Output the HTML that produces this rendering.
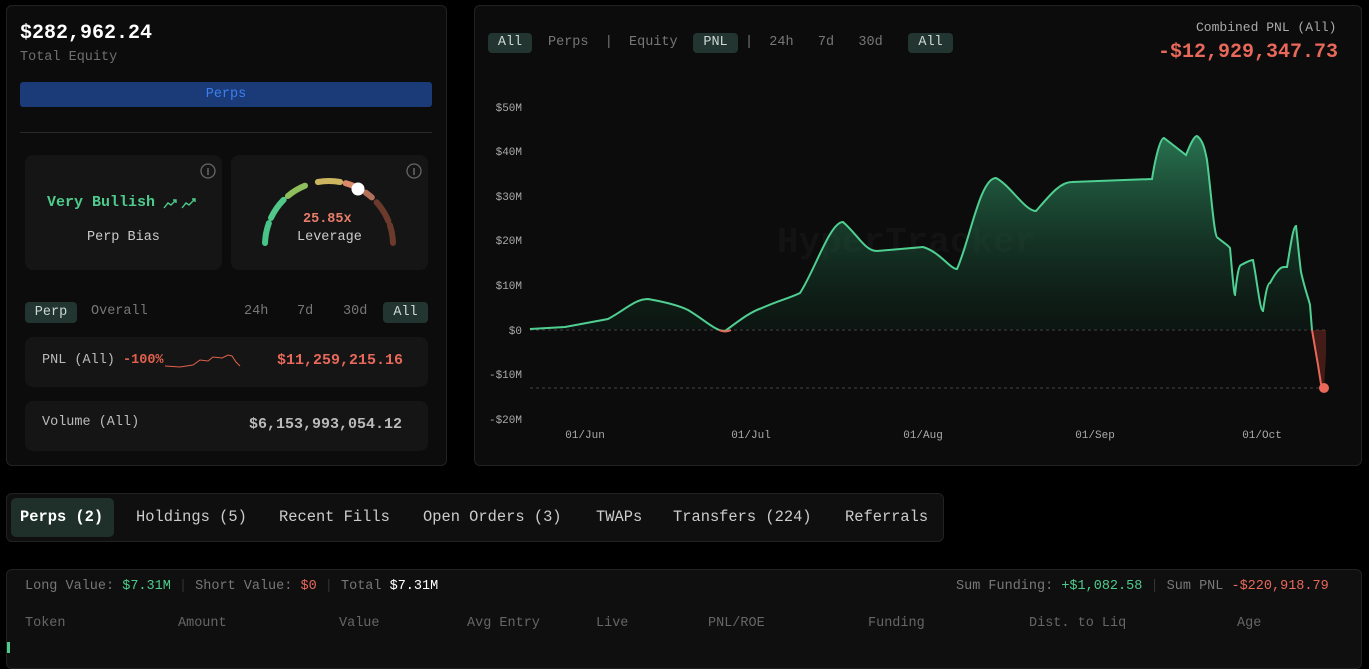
<!DOCTYPE html>
<html><head><meta charset="utf-8"><style>
*{box-sizing:border-box;margin:0;padding:0}
body{width:1369px;height:653px;background:#000;font-family:"Liberation Mono",monospace;color:#ddd;position:relative;overflow:hidden}
.abs{position:absolute;white-space:nowrap}
.panel{position:absolute;background:#0c0c0c;border:1px solid #222;border-radius:6px}
.card{position:absolute;background:#151515;border-radius:8px}
.pill{position:absolute;background:#223530;color:#cfd8d4;border-radius:4px;text-align:center}
.g{color:#777}
svg{z-index:2}
</style></head><body>
<div class="panel" style="left:6px;top:5px;width:441px;height:461px"></div>
<div class="abs" style="left:20px;top:22px;font-size:20px;font-weight:bold;color:#fff">$282,962.24</div>
<div class="abs g" style="left:20px;top:50px;font-size:13.5px;color:#6f6f6f">Total Equity</div>
<div class="abs" style="left:20px;top:82px;width:412px;height:25px;background:#1a3a78;border-radius:3px;color:#3c7ff0;font-size:13.5px;text-align:center;line-height:25px">Perps</div>
<div class="abs" style="left:20px;top:132px;width:412px;height:1px;background:#2a2a2a"></div>
<div class="card" style="left:25px;top:155px;width:197px;height:115px"></div>
<div class="card" style="left:231px;top:155px;width:197px;height:115px"></div>
<div class="card" style="left:25px;top:337px;width:403px;height:50px"></div>
<div class="card" style="left:25px;top:401px;width:403px;height:50px"></div>
<svg class="abs" style="left:0;top:0" width="460" height="470">
<circle cx="208" cy="171" r="7" fill="none" stroke="#666" stroke-width="1.3"/><line x1="208" y1="168" x2="208" y2="175" stroke="#666" stroke-width="1.5"/>
<circle cx="414" cy="171" r="7" fill="none" stroke="#666" stroke-width="1.3"/><line x1="414" y1="168" x2="414" y2="175" stroke="#666" stroke-width="1.5"/>
<g fill="none" stroke-width="6" stroke-linecap="round">
<path d="M265 243 A64 64 0 0 1 268.9 223.1" stroke="#49c489"/>
<path d="M271 217.9 A64 64 0 0 1 283.7 199.7" stroke="#52c78a"/>
<path d="M287.9 196 A64 64 0 0 1 305 185.7" stroke="#8fbf5c"/>
<path d="M317.9 182 A64 64 0 0 1 340.1 182" stroke="#cdb45e"/>
<path d="M345.6 183.2 A64 64 0 0 1 353 185.7" stroke="#d98a6a"/>
<path d="M365.7 192.6 A64 64 0 0 1 371.8 197.4" stroke="#b0705a"/>
<path d="M376.6 202.2 A64 64 0 0 1 388.3 221" stroke="#6b3a2c"/>
<path d="M389.9 225.2 A64 64 0 0 1 393 243" stroke="#6b3a2c"/>
</g>
<circle cx="358" cy="189" r="6.5" fill="#fff"/>
<g fill="none" stroke="#4ecb8c" stroke-width="1.4"><polyline points="164,208 168,203 171,205 176,200"/><polyline points="173,200 176,200 176,203"/><polyline points="182,208 186,203 189,205 195,199"/><polyline points="192,199 195,199 195,202"/></g>
<polyline points="165,366 180,367 193,365 200,360 208,361 213,357 222,358 228,355 232,356 236,362 240,366" fill="none" stroke="#e0604c" stroke-width="1"/>
</svg>
<div class="abs" style="left:47px;top:194px;font-size:15px;font-weight:bold;color:#4ecb8c">Very Bullish</div>
<div class="abs" style="left:87px;top:230px;font-size:13.5px;color:#ccc">Perp Bias</div>
<div class="abs" style="left:303px;top:212px;font-size:13.5px;font-weight:bold;color:#e77d6a">25.85x</div>
<div class="abs" style="left:297px;top:230px;font-size:13.5px;color:#ccc">Leverage</div>
<div class="pill" style="left:25px;top:302px;width:52px;height:21px;font-size:13.5px;line-height:21px">Perp</div>
<div class="abs g" style="left:91px;top:304px;font-size:13.5px">Overall</div>
<div class="abs g" style="left:244px;top:304px;font-size:13.5px">24h</div>
<div class="abs g" style="left:297px;top:304px;font-size:13.5px">7d</div>
<div class="abs g" style="left:343px;top:304px;font-size:13.5px">30d</div>
<div class="pill" style="left:383px;top:302px;width:45px;height:21px;font-size:13.5px;line-height:21px">All</div>
<div class="abs" style="left:42px;top:353px;font-size:13.5px;color:#bbb">PNL (All) <span style="color:#e0604c;font-weight:bold">-100%</span></div>
<div class="abs" style="left:277px;top:352px;font-size:15px;font-weight:bold;color:#e8685a">$11,259,215.16</div>
<div class="abs" style="left:42px;top:415px;font-size:13.5px;color:#bbb">Volume (All)</div>
<div class="abs" style="left:249px;top:416px;font-size:15px;font-weight:bold;color:#bbb">$6,153,993,054.12</div>

<div class="panel" style="left:474px;top:5px;width:888px;height:461px"></div>
<div class="pill" style="left:488px;top:33px;width:44px;height:20px;font-size:13.5px;line-height:20px">All</div>
<div class="abs g" style="left:548px;top:35px;font-size:13.5px">Perps &nbsp;| &nbsp;Equity</div>
<div class="pill" style="left:693px;top:33px;width:45px;height:20px;font-size:13.5px;line-height:20px">PNL</div>
<div class="abs g" style="left:745px;top:35px;font-size:13.5px">| &nbsp;24h &nbsp;&nbsp;7d &nbsp;&nbsp;30d</div>
<div class="pill" style="left:908px;top:33px;width:45px;height:20px;font-size:13.5px;line-height:20px">All</div>
<div class="abs" style="left:1196px;top:20px;font-size:13px;color:#aaa">Combined PNL (All)</div>
<div class="abs" style="left:1158px;top:41px;font-size:20px;font-weight:bold;color:#e8685a">-$12,929,347.73</div>
<div class="abs" style="left:777px;top:222px;font-size:36px;font-weight:bold;color:#131313">HyperTracker</div>
<svg class="abs" style="left:0;top:0" width="1369" height="470">
<defs><linearGradient id="gf" x1="0" y1="130" x2="0" y2="330" gradientUnits="userSpaceOnUse"><stop offset="0" stop-color="#2f8a60" stop-opacity=".85"/><stop offset="1" stop-color="#0d2a1d" stop-opacity=".3"/></linearGradient></defs>
<g font-family="Liberation Mono, monospace" font-size="11" fill="#aaa" text-anchor="end">
<text x="522" y="111">$50M</text><text x="522" y="155">$40M</text><text x="522" y="200">$30M</text><text x="522" y="244">$20M</text><text x="522" y="289">$10M</text><text x="522" y="334">$0</text><text x="522" y="378">-$10M</text><text x="522" y="423">-$20M</text>
</g>
<g font-family="Liberation Mono, monospace" font-size="11" fill="#aaa" text-anchor="middle">
<text x="585" y="438">01/Jun</text><text x="751" y="438">01/Jul</text><text x="923" y="438">01/Aug</text><text x="1095" y="438">01/Sep</text><text x="1262" y="438">01/Oct</text>
</g>
<line x1="530" y1="330" x2="1325" y2="330" stroke="#444" stroke-dasharray="3,3"/>
<line x1="530" y1="388" x2="1325" y2="388" stroke="#444" stroke-dasharray="3,3"/>
<path d="M530 329 L565 327 L608 319 C625 310 635 299 648 299 C665 302 680 306 688 310 C705 320 715 331 725 331 C740 320 750 312 762 308 C780 300 790 298 800 293 C815 270 830 222 843 222 C858 235 865 251 877 251 L923 247 C940 252 950 269 957 269 C970 240 980 178 996 178 C1010 185 1025 211 1036 211 C1050 195 1060 182 1072 182 L1152 179 C1155 160 1160 138 1164 138 L1186 155 C1190 145 1194 136 1197 136 C1203 140 1205 150 1207 160 C1212 200 1214 238 1218 238 C1224 243 1228 245 1230 248 C1232 270 1234 295 1235 295 C1237 275 1239 265 1241 265 C1247 262 1250 260 1253 260 C1257 280 1260 311 1263 311 C1266 290 1268 283 1270 283 C1276 272 1280 267 1284 267 L1287 267 C1290 250 1293 226 1296 226 C1298 245 1300 265 1301 272 C1305 290 1309 300 1310 305 L1312 330 Z" fill="url(#gf)"/>
<path d="M530 329 L565 327 L608 319 C625 310 635 299 648 299 C665 302 680 306 688 310 C705 320 715 331 725 331 C740 320 750 312 762 308 C780 300 790 298 800 293 C815 270 830 222 843 222 C858 235 865 251 877 251 L923 247 C940 252 950 269 957 269 C970 240 980 178 996 178 C1010 185 1025 211 1036 211 C1050 195 1060 182 1072 182 L1152 179 C1155 160 1160 138 1164 138 L1186 155 C1190 145 1194 136 1197 136 C1203 140 1205 150 1207 160 C1212 200 1214 238 1218 238 C1224 243 1228 245 1230 248 C1232 270 1234 295 1235 295 C1237 275 1239 265 1241 265 C1247 262 1250 260 1253 260 C1257 280 1260 311 1263 311 C1266 290 1268 283 1270 283 C1276 272 1280 267 1284 267 L1287 267 C1290 250 1293 226 1296 226 C1298 245 1300 265 1301 272 C1305 290 1309 300 1310 305 L1312 330" fill="none" stroke="#4fcf91" stroke-width="2"/>
<path d="M1312 330 L1318 365 L1322 385 L1324 388 L1326 355 L1326 330 Z" fill="#7a2a22" opacity=".5"/>
<path d="M1312 330 L1318 365 L1321 384 L1324 388" fill="none" stroke="#e8685a" stroke-width="2"/>
<path d="M719 330 Q725 333 731 330" fill="none" stroke="#e8685a" stroke-width="2"/>
<circle cx="1324" cy="388" r="5" fill="#e8685a"/>
</svg>

<div class="panel" style="left:6px;top:493px;width:938px;height:49px;background:#0f0f0f"></div>
<div class="abs" style="left:11px;top:498px;width:103px;height:39px;background:#1f302b;border-radius:5px"></div>
<div class="abs" style="left:20px;top:508px;font-size:15.4px;font-weight:bold;color:#fff">Perps (2)</div>
<div class="abs" style="left:136px;top:508px;font-size:15.4px;color:#ccc">Holdings (5)</div>
<div class="abs" style="left:279px;top:508px;font-size:15.4px;color:#ccc">Recent Fills</div>
<div class="abs" style="left:423px;top:508px;font-size:15.4px;color:#ccc">Open Orders (3)</div>
<div class="abs" style="left:596px;top:508px;font-size:15.4px;color:#ccc">TWAPs</div>
<div class="abs" style="left:673px;top:508px;font-size:15.4px;color:#ccc">Transfers (224)</div>
<div class="abs" style="left:845px;top:508px;font-size:15.4px;color:#ccc">Referrals</div>

<div class="panel" style="left:6px;top:569px;width:1356px;height:100px;background:#0f0f0f"></div>
<div class="abs" style="left:25px;top:579px;font-size:13.5px;color:#777;white-space:pre">Long Value: <span style="color:#4ecb8c">$7.31M</span> <span style="color:#333">|</span> Short Value: <span style="color:#e8685a">$0</span> <span style="color:#333">|</span> Total <span style="color:#fff">$7.31M</span></div>
<div class="abs" style="left:956px;top:579px;font-size:13.5px;color:#777;white-space:pre">Sum Funding: <span style="color:#4ecb8c">+$1,082.58</span> <span style="color:#333">|</span> Sum PNL <span style="color:#e8685a">-$220,918.79</span></div>
<div class="abs" style="top:616px;left:0;font-size:13.5px;color:#666">
<span class="abs" style="left:25px">Token</span><span class="abs" style="left:178px">Amount</span><span class="abs" style="left:339px">Value</span><span class="abs" style="left:467px">Avg Entry</span><span class="abs" style="left:596px">Live</span><span class="abs" style="left:708px">PNL/ROE</span><span class="abs" style="left:868px">Funding</span><span class="abs" style="left:1029px">Dist. to Liq</span><span class="abs" style="left:1237px">Age</span></div>
<div class="abs" style="left:7px;top:642px;width:3px;height:11px;background:#4ecb8c"></div>
</body></html>
